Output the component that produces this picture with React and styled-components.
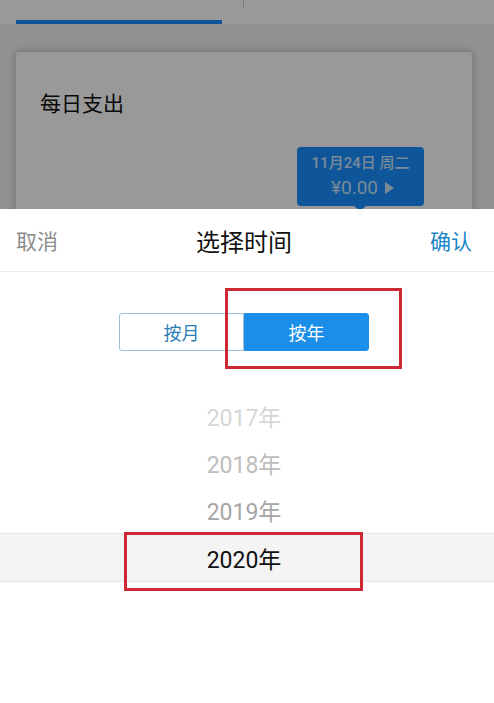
import React from "react";
import styled, { createGlobalStyle } from "styled-components";

const Global = createGlobalStyle`
  html, body { margin: 0; padding: 0; background: #fff; }
  body { font-family: Roboto, "Noto Sans CJK SC", "Noto Sans", sans-serif; }
  * { box-sizing: border-box; }
`;

const Screen = styled.div`
  width: 494px;
  height: 703px;
  display: flex;
  flex-direction: column;
  overflow: hidden;
  position: relative;
`;

const Backdrop = styled.div`
  position: relative;
  height: 209px;
  flex: none;
  background: #f2f2f2;
  overflow: hidden;
`;

const Mask = styled.div`
  position: absolute;
  inset: 0;
  background: rgba(0, 0, 0, 0.4);
`;

const TabBar = styled.div`
  height: 24px;
  background: #fff;
  display: flex;
  padding: 0 16px;
  position: relative;
`;

const Tab = styled.div`
  width: 206px;
  height: 24px;
  border-bottom: 4px solid ${(p) => (p.$active ? "#1890ff" : "transparent")};
`;

const TabDivider = styled.div`
  width: 1px;
  height: 8px;
  background: #ccc;
  margin-left: 21px;
`;

const Card = styled.div`
  margin: 28px 22px 0 16px;
  height: 200px;
  background: #fff;
  border-radius: 3px;
  box-shadow: 0 -3px 6px rgba(0, 0, 0, 0.1), -4px 0 6px rgba(0, 0, 0, 0.06), 4px 0 6px rgba(0, 0, 0, 0.06);
  padding: 38px 0 0 24px;
  position: relative;
`;

const CardTitle = styled.div`
  font-size: 21px;
  color: #111;
  line-height: 28px;
`;

const Tip = styled.div`
  position: absolute;
  left: 281px;
  top: 95px;
  width: 127px;
  height: 59px;
  background: #1890ff;
  border-radius: 4px;
  display: flex;
  flex-direction: column;
  align-items: center;
  padding-top: 6px;
  color: rgba(255, 255, 255, 0.78);
  &::after {
    content: "";
    position: absolute;
    left: 57px;
    bottom: -5px;
    border-left: 6px solid transparent;
    border-right: 6px solid transparent;
    border-top: 5px solid #1890ff;
  }
`;

const TipDate = styled.div`
  font-size: 15px;
  line-height: 20px;
  font-weight: 500;
`;

const TipAmount = styled.div`
  font-size: 19px;
  line-height: 26px;
  margin-top: 2px;
  display: flex;
  align-items: center;
  gap: 7px;
  padding-left: 4px;
`;

const Arrow = styled.span`
  width: 0;
  height: 0;
  border-top: 6px solid transparent;
  border-bottom: 6px solid transparent;
  border-left: 9px solid rgba(255, 255, 255, 0.78);
`;

const Sheet = styled.div`
  flex: 1;
  background: #fff;
  position: relative;
`;

const Header = styled.div`
  height: 63px;
  border-bottom: 1px solid #ececec;
  display: flex;
  align-items: center;
  justify-content: space-between;
  padding: 0 22px 0 16px;
`;

const HeaderBtn = styled.div`
  font-size: 21px;
  color: ${(p) => p.$color};
  width: 60px;
  text-align: ${(p) => p.$align};
`;

const HeaderTitle = styled.div`
  font-size: 24px;
  color: #111;
`;

const SegmentWrap = styled.div`
  display: flex;
  justify-content: center;
  margin-top: 41px;
`;

const Segment = styled.div`
  display: flex;
  width: 250px;
  height: 38px;
  margin-left: -6px;
`;

const SegBtn = styled.div`
  flex: 1;
  display: flex;
  align-items: center;
  justify-content: center;
  font-size: 18px;
  color: ${(p) => (p.$active ? "#fff" : "#2b7db6")};
  background: ${(p) => (p.$active ? "#1a8ee8" : "#fff")};
  border: 1px solid ${(p) => (p.$active ? "#1a8ee8" : "#9fbdd2")};
  border-radius: ${(p) => (p.$side === "left" ? "3px 0 0 3px" : "0 3px 3px 0")};
`;

const Picker = styled.div`
  margin-top: 41px;
  display: flex;
  flex-direction: column;
`;

const Row = styled.div`
  height: ${(p) => (p.$selected ? "49px" : "47px")};
  display: flex;
  align-items: center;
  justify-content: center;
  padding-right: 6px;
  font-size: 23px;
  color: ${(p) => p.$color};
  background: ${(p) => (p.$selected ? "#f4f4f5" : "transparent")};
  border-top: ${(p) => (p.$selected ? "1px solid #e6e6e6" : "none")};
  border-bottom: ${(p) => (p.$selected ? "1px solid #e6e6e6" : "none")};
`;

const Mark = styled.div`
  position: absolute;
  border: 3px solid #cc2a33;
  pointer-events: none;
`;

const years = [
  { y: "2017年", c: "#d6d6d6" },
  { y: "2018年", c: "#bdbdbd" },
  { y: "2019年", c: "#a6a6a6" },
  { y: "2020年", c: "#111", sel: true },
];

export default function App() {
  return (
    <>
      <Global />
      <Screen>
        <Backdrop>
          <TabBar>
            <Tab $active />
            <TabDivider />
          </TabBar>
          <Card>
            <CardTitle>每日支出</CardTitle>
            <Tip>
              <TipDate>11月24日 周二</TipDate>
              <TipAmount>
                ¥0.00 <Arrow />
              </TipAmount>
            </Tip>
          </Card>
          <Mask />
        </Backdrop>
        <Sheet>
          <Header>
            <HeaderBtn $color="#8c8c8c" $align="left">取消</HeaderBtn>
            <HeaderTitle>选择时间</HeaderTitle>
            <HeaderBtn $color="#1a86c8" $align="right">确认</HeaderBtn>
          </Header>
          <SegmentWrap>
            <Segment>
              <SegBtn $side="left">按月</SegBtn>
              <SegBtn $side="right" $active>按年</SegBtn>
            </Segment>
          </SegmentWrap>
          <Picker>
            {years.map((r) => (
              <Row key={r.y} $color={r.c} $selected={r.sel}>
                {r.y}
              </Row>
            ))}
          </Picker>
          <Mark style={{ left: 225, top: 79, width: 177, height: 81 }} />
          <Mark style={{ left: 124, top: 323, width: 239, height: 59 }} />
        </Sheet>
      </Screen>
    </>
  );
}
